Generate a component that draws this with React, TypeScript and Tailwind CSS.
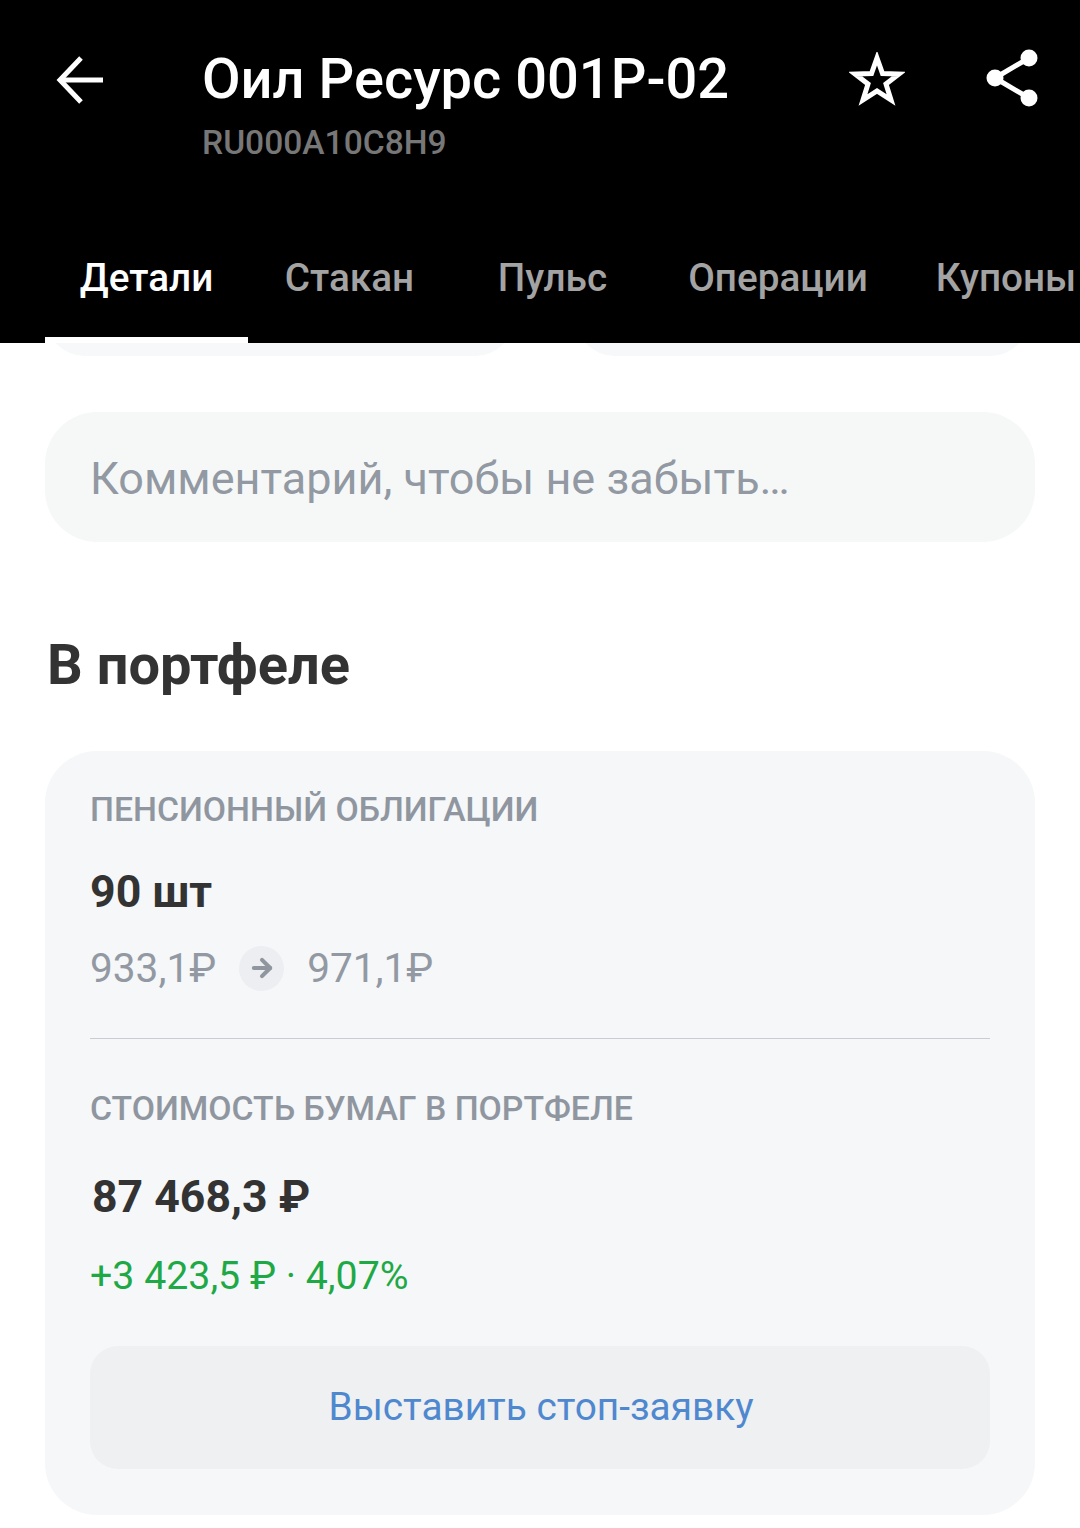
import { ArrowRight } from "lucide-react";

const tabs = [
  { label: "Детали", className: "w-[203px] ml-[45px] text-white border-white" },
  { label: "Стакан", className: "w-[203px] text-[#a3a3a3] border-transparent" },
  { label: "Пульс", className: "w-[203px] text-[#a3a3a3] border-transparent" },
  { label: "Операции", className: "w-[248px] text-[#a3a3a3] border-transparent" },
  { label: "Купоны", className: "w-[208px] text-[#a3a3a3] border-transparent" },
];

const BackIcon = () => (
  <svg width="48" height="50" viewBox="0 0 48 50" fill="none" stroke="white" strokeWidth="5">
    <path d="M47 25 H5" />
    <path d="M25 3 L4 25 L25 47" />
  </svg>
);

const StarIcon = () => (
  <svg width="56" height="54" viewBox="0 0 56 54" fill="none">
    <path
      d="M28 6 L33.500 21.500 L50 22 L37 32 L42 48 L28 39 L14 48 L19 32 L6 22 L22.500 21.500 Z"
      stroke="white"
      strokeWidth="5"
    />
  </svg>
);

const ShareIcon = () => (
  <svg width="52" height="58" viewBox="0 0 52 58" fill="white">
    <path d="M9 29 L43 9 M9 29 L43 49" stroke="white" strokeWidth="5" />
    <circle cx="9" cy="29" r="8.500" />
    <circle cx="43" cy="9" r="8.500" />
    <circle cx="43" cy="49" r="8.500" />
  </svg>
);

const App = () => {
  return (
    <div className="h-[1528px] w-[1080px] overflow-hidden bg-white font-['Roboto',sans-serif]">
      <div className="h-[343px] bg-black">
        <div className="flex h-[235px] items-start">
          <div className="ml-[56px] mt-[55px] w-[146px]">
            <BackIcon />
          </div>
          <div className="mt-[46px] w-[610px]">
            <h1 className="text-[56px] leading-[66px] font-medium text-white">
              Оил Ресурс 001Р-02
            </h1>
            <p className="mt-[11px] text-[33.600px] leading-[40px] font-medium text-[#777777]">
              RU000A10C8H9
            </p>
          </div>
          <div className="mt-[52px] ml-[37px]">
            <StarIcon />
          </div>
          <div className="mt-[49px] ml-[81px]">
            <ShareIcon />
          </div>
        </div>
        <div className="flex h-[108px] overflow-hidden">
          {tabs.map((tab) => (
            <div
              key={tab.label}
              className={`flex shrink-0 items-start justify-center border-b-[6px] pt-[21px] text-[38.700px] leading-[44px] font-medium ${tab.className}`}
            >
              {tab.label}
            </div>
          ))}
        </div>
      </div>

      <div className="flex h-[13px] items-end gap-[60px] overflow-hidden pl-[45px]">
        <div className="h-[100px] w-[470px] shrink-0 rounded-b-[40px] bg-[#f6f8f9]"></div>
        <div className="h-[100px] w-[455px] shrink-0 rounded-b-[40px] bg-[#f6f8f9]"></div>
      </div>

      <div className="mx-[45px] mt-[56px] flex h-[130px] items-center rounded-[52px] bg-[#f6f8f8] pt-[3px] pl-[45px] text-[45px] text-[#9299a2]">
        Комментарий, чтобы не забыть…
      </div>

      <h2 className="mt-[93px] ml-[47px] text-[56px] leading-[60px] font-bold text-[#333333]">
        В портфеле
      </h2>

      <div className="mx-[45px] mt-[56px] h-[764px] rounded-[52px] bg-[#f5f7f9] px-[45px] pt-[39px]">
        <p className="text-[33.750px] leading-[40px] font-medium text-[#8f969f]">
          ПЕНСИОННЫЙ ОБЛИГАЦИИ
        </p>
        <p className="mt-[36px] text-[44.700px] leading-[52px] font-bold text-[#333333]">90 шт</p>
        <div className="mt-[26px] flex items-center text-[40.600px] leading-[48px] text-[#9299a2]">
          <span>933,1₽</span>
          <span className="mx-[23px] flex size-[45px] items-center justify-center rounded-full bg-[#eceef1]">
            <ArrowRight size={28} strokeWidth={3.500} color="#8f969f" />
          </span>
          <span>971,1₽</span>
        </div>
        <div className="mt-[46px] h-[1px] bg-[#c9ccd1]"></div>
        <p className="mt-[50px] text-[33.750px] leading-[40px] font-medium text-[#8f969f]">
          СТОИМОСТЬ БУМАГ В ПОРТФЕЛЕ
        </p>
        <p className="mt-[42px] ml-[2px] text-[44.600px] leading-[52px] font-bold text-[#333333]">
          87 468,3 ₽
        </p>
        <p className="mt-[29px] text-[39.300px] leading-[48px] text-[#1fa946]">+3 423,5 ₽ · 4,07%</p>
        <div className="mt-[46px] flex h-[123px] items-center justify-center rounded-[28px] bg-[#eef0f2] pl-[2px] text-[38.800px] text-[#4f88cf]">
          Выставить стоп-заявку
        </div>
      </div>
    </div>
  );
};

export default App;
